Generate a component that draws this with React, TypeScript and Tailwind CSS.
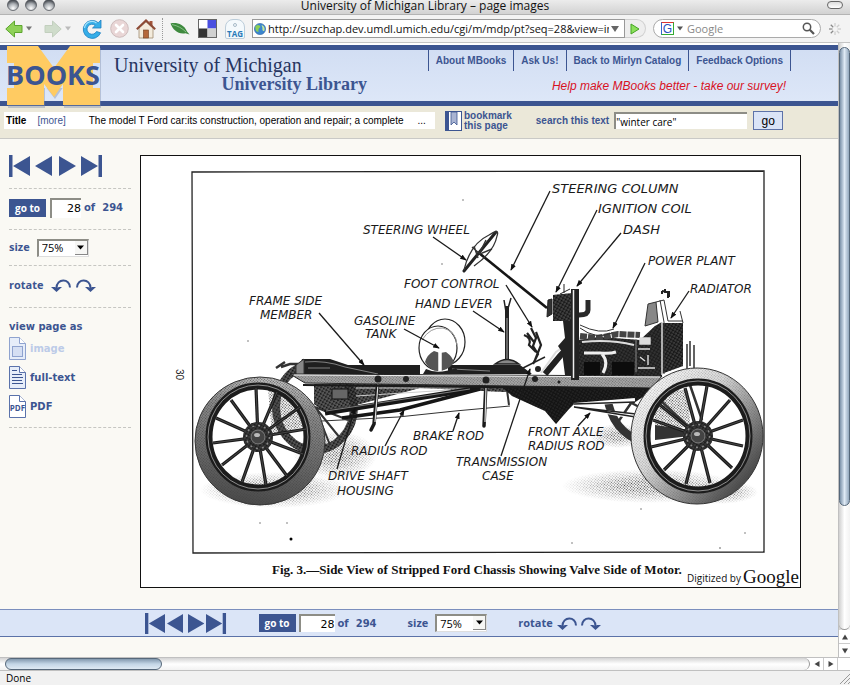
import React from 'react';

const NAVY = '#3c5591';

function TitleBar() {
  return (
    <div className="relative flex h-[15px] items-start justify-center border-b border-[#b4b4b4] bg-linear-to-b from-[#ececec] to-[#d2d2d2]">
      <svg className="absolute left-0 top-0" width="64" height="14" viewBox="0 0 64 14" aria-hidden="true">
        <defs>
          <radialGradient id="orb" cx="0.5" cy="0.8" r="0.7">
            <stop offset="0" stopColor="#fff" />
            <stop offset="0.6" stopColor="#a9adb2" />
            <stop offset="1" stopColor="#4c5056" />
          </radialGradient>
        </defs>
        {[13, 31, 49].map((x) => (
          <circle key={x} cx={x} cy="5" r="5.5" fill="url(#orb)" stroke="#54585e" strokeWidth="0.8" />
        ))}
      </svg>
      <h1 className="font-['Open_Sans',sans-serif] text-[12px] leading-[12px] text-[#111]">
        University of Michigan Library – page images
      </h1>
      <div className="absolute right-[7px] top-[1px] h-[8px] w-[16px] rounded-full border border-[#666] bg-linear-to-b from-[#ddd] to-white" />
    </div>
  );
}

function Arrow({ left, fill, stroke }: { left?: boolean; fill: string; stroke: string }) {
  return (
    <svg width="18" height="18" viewBox="0 0 18 18" aria-hidden="true">
      <path
        d={left ? 'M0.8 9 L9.5 1 V5.5 H17 V12.5 H9.5 V17 Z' : 'M17.2 9 L8.5 1 V5.5 H1 V12.5 H8.5 V17 Z'}
        fill={fill}
        stroke={stroke}
        strokeWidth="1"
        strokeLinejoin="round"
      />
    </svg>
  );
}

function Caret({ color }: { color: string }) {
  return (
    <svg className="ml-[3px]" width="6" height="5" viewBox="0 0 6 5" aria-hidden="true">
      <path d="M0 0.5H6L3 4.5Z" fill={color} />
    </svg>
  );
}

function Toolbar() {
  return (
    <div className="flex h-[28px] items-center border-b border-[#c4c4c4] bg-[#f3f3f3] pl-[5px] pr-[8px]">
      <button aria-label="Back" className="flex items-center">
        <Arrow left fill="#8fd158" stroke="#5da52f" />
        <Caret color="#777" />
      </button>
      <button aria-label="Forward" className="ml-[12px] flex items-center">
        <Arrow fill="#cfdccb" stroke="#c2cfbe" />
        <Caret color="#bbb" />
      </button>
      <button aria-label="Reload" className="ml-[11px]">
        <svg width="20" height="20" viewBox="0 0 20 20" aria-hidden="true">
          <path d="M19 1V9H10.500L13.200 6.400A5 5 0 1 0 14.500 12.500L18.600 13.800A9 9 0 1 1 16.200 3.700Z" fill="#36aee8" stroke="#1d7fc0" strokeWidth="0.8" />
          <path d="M2.500 9A7.500 7.500 0 0 1 14.500 4" fill="none" stroke="#a5e2fb" strokeWidth="1.200" />
        </svg>
      </button>
      <button aria-label="Stop" className="ml-[8px]">
        <svg width="19" height="19" viewBox="0 0 19 19" aria-hidden="true">
          <circle cx="9.500" cy="9.500" r="8.800" fill="#e9d6d6" stroke="#cdbcbc" />
          <path d="M6 6L13 13M13 6L6 13" stroke="#fff" strokeWidth="2.600" strokeLinecap="round" />
        </svg>
      </button>
      <button aria-label="Home" className="ml-[7px]">
        <svg width="20" height="20" viewBox="0 0 20 20" aria-hidden="true">
          <rect x="13.500" y="2" width="3" height="6" fill="#a3553b" />
          <path d="M3 9L10 3L17 9V19H3Z" fill="#f3ebdc" stroke="#a08a70" strokeWidth="0.8" />
          <path d="M0.800 10.200L10 1.500L19.200 10.200" fill="none" stroke="#8d4a35" strokeWidth="2" />
          <rect x="7.500" y="11" width="5" height="8" fill="#b5683b" stroke="#6f3c20" strokeWidth="0.6" />
        </svg>
      </button>
      <div className="ml-[6px] h-[22px] border-l border-dotted border-[#999]" />
      <button aria-label="Leaf" className="ml-[7px]">
        <svg width="20" height="14" viewBox="0 0 20 14" aria-hidden="true">
          <path d="M0.500 1.500C6 0 14 2 17 9.500L19.500 12.500L15.500 11.200C8 12.500 3 8 0.500 1.500Z" fill="#3f8a3f" />
          <path d="M2 2.500C8 4 12 6 16 10" stroke="#85c285" fill="none" />
        </svg>
      </button>
      <button aria-label="Bookmarks" className="ml-[8px]">
        <svg width="19" height="19" viewBox="0 0 19 19" aria-hidden="true">
          <rect x="0.500" y="0.500" width="18" height="18" fill="#fff" stroke="#666" />
          <rect x="9.500" y="1" width="8.500" height="8.500" fill="#4a4fe0" />
          <rect x="1" y="9.500" width="8.500" height="8.500" fill="#333" />
          <rect x="9.500" y="9.500" width="8.500" height="8.500" fill="#d0d0d0" />
        </svg>
      </button>
      <button aria-label="Tag" className="ml-[8px] flex h-[20px] w-[20px] flex-col items-center justify-end rounded-t-[8px] rounded-b-[2px] border border-[#bccdda] bg-[#f4f9fc] font-['Open_Sans',sans-serif] text-[8px] font-bold leading-[9px] text-[#2a7ab8]">
        <span className="mb-[2px] h-[4px] w-[4px] rounded-full border border-[#a8bac8]" />
        TAG
      </button>
      <div className="ml-[7px] flex h-[19px] min-w-0 flex-1 items-center border border-[#999] bg-white pl-[1px] pr-[5px]">
        <svg className="shrink-0" width="12" height="12" viewBox="0 0 12 12" aria-hidden="true">
          <circle cx="6" cy="6" r="5.600" fill="#3c86cf" stroke="#2d63a0" strokeWidth="0.6" />
          <path d="M1.500 3C4 1 6 2 6.500 4C5 5 4 6 4.500 9C2 9 1 6 1.500 3Z" fill="#8ccf54" />
          <path d="M7.500 2C10 2.500 11 5 10.500 7.500C9 9 8 7 8.500 5Z" fill="#c6ea9b" />
        </svg>
        <input
          aria-label="Address"
          className="ml-[2px] min-w-0 flex-1 bg-transparent font-['Open_Sans',sans-serif] text-[11px] leading-[16px] text-[#111] outline-none"
          defaultValue="http://suzchap.dev.umdl.umich.edu/cgi/m/mdp/pt?seq=28&view=image"
        />
        <svg className="ml-[2px] shrink-0" width="8" height="6" viewBox="0 0 8 6" aria-hidden="true">
          <path d="M0 0H8L4 6Z" fill="#666" />
        </svg>
      </div>
      <button aria-label="Go to address" className="flex h-[19px] w-[21px] items-center justify-center rounded-r-full border border-l-0 border-[#d0d0d0] bg-[#eee]">
        <svg width="10" height="12" viewBox="0 0 10 12" aria-hidden="true">
          <path d="M1 1L9 6L1 11Z" fill="#8be05b" stroke="#45a424" />
        </svg>
      </button>
      <div className="ml-[7px] flex h-[19px] w-[168px] items-center rounded-full border border-[#aaa] bg-white pl-[7px] pr-[5px]">
        <span className="flex h-[13px] w-[13px] items-center justify-center border border-t-[#d33] border-r-[#3a3] border-b-[#3a3] border-l-[#36c] font-['Liberation_Sans',Arial,sans-serif] text-[12px] leading-[12px] text-[#2b4fc0]">
          G
        </span>
        <Caret color="#555" />
        <input
          aria-label="Search Google"
          placeholder="Google"
          className="ml-[4px] w-[60px] min-w-0 flex-1 bg-transparent font-['Open_Sans',sans-serif] text-[11px] leading-[16px] outline-none placeholder:text-[#888]"
        />
        <svg width="13" height="13" viewBox="0 0 13 13" aria-hidden="true">
          <circle cx="5" cy="5" r="3.700" fill="none" stroke="#555" strokeWidth="1.500" />
          <path d="M7.800 7.800L12 12" stroke="#555" strokeWidth="2.200" />
        </svg>
      </div>
      <svg className="ml-[7px]" width="14" height="14" viewBox="0 0 14 14" aria-hidden="true">
        {[0, 45, 90, 135, 180, 225, 270, 315].map((a) => (
          <path key={a} d="M7 1V4.500" stroke={a > 180 ? '#888' : '#ccc'} strokeWidth="1.200" transform={`rotate(${a} 7 7)`} />
        ))}
      </svg>
    </div>
  );
}

function Header() {
  const links = ['About MBooks', 'Ask Us!', 'Back to Mirlyn Catalog', 'Feedback Options'];
  return (
    <header className="flex h-[61px] border-y-[5px] border-[#3c5591] bg-linear-to-b from-[#d2def3] to-[#dde7f8]">
      <svg className="relative -mt-[5px] shrink-0 overflow-visible" width="104" height="61" viewBox="0 45 104 61" role="img" aria-label="MBooks">
        <path
          d="M8 48H38L54 70L70 48H101V65H101V90H101V108H64V86L55 99L45 86V108H8V90H8V65H8Z"
          fill="#7d8cab"
          opacity="0.4"
        />
        <path d="M7 63H100V88H7Z" fill="#d8e3f5" />
        <path d="M7 46H38L54 68L70 46H100V63H93V88H100V105H63V84L54 97L44 84V105H7V88H14V63H7Z" fill="#ffcb62" />
        <text x="6" y="85" fontFamily="Open Sans, sans-serif" fontWeight="700" fontSize="27" fill={NAVY}>
          BOOKS
        </text>
      </svg>
      <div className="ml-[10px] w-[253px] shrink-0 pt-[5px] font-['Liberation_Serif',serif]">
        <div className="text-[20px] leading-[20px] text-[#27355f]">University of Michigan</div>
        <div className="text-right text-[18px] font-bold leading-[18px] text-[#3c5591]">University Library</div>
      </div>
      <div className="ml-auto mr-[47px] font-['Liberation_Sans',Arial,sans-serif]">
        <nav className="flex border-l border-[#3c5591]">
          {links.map((l) => (
            <a key={l} href="#" className="border-r border-[#3c5591] px-[7px] pb-[3px] pt-[4px] text-[10px] font-bold leading-[14px] text-[#3c5591]">
              {l}
            </a>
          ))}
        </nav>
        <a href="#" className="mr-[5px] mt-[7px] block text-right text-[12px] italic leading-[16px] text-[#d8121f]">
          Help make MBooks better - take our survey!
        </a>
      </div>
    </header>
  );
}

function TitleRow() {
  return (
    <div className="flex h-[33px] items-center border-b border-[#c9c9c6] bg-[#ebe8d9] pb-[3px] font-['Liberation_Sans',Arial,sans-serif]">
      <div className="ml-[4px] flex h-[17px] w-[431px] items-center bg-white pl-[2px] text-[10px] leading-[16px] text-black">
        <b>Title</b>
        <a href="#" className="ml-[11px] text-[#3c5591]">[more]</a>
        <span className="ml-[23px] whitespace-nowrap">The model T Ford car:its construction, operation and repair; a complete</span>
        <span className="ml-[14px]">...</span>
      </div>
      <a href="#" className="ml-[10px] flex items-center text-[10px] font-bold leading-[10px] text-[#3c5591]">
        <svg className="mr-[2px]" width="17" height="20" viewBox="0 0 17 20" aria-hidden="true">
          <rect x="0.500" y="0.500" width="16" height="19" fill="#fff" stroke={NAVY} />
          <rect x="0" y="0" width="4" height="20" fill={NAVY} />
          <path d="M6 1H12V14L9 11L6 14Z" fill="#a9b4d2" stroke={NAVY} strokeWidth="0.8" />
        </svg>
        <span>
          bookmark
          <br />
          this page
        </span>
      </a>
      <form className="ml-[24px] flex items-center" onSubmit={(e) => e.preventDefault()}>
        <label htmlFor="q" className="text-[10px] font-bold text-[#3c5591]">search this text</label>
        <input
          id="q"
          defaultValue={'"winter care"'}
          className="ml-[5px] h-[17px] w-[133px] border-l-2 border-t-2 border-[#8d8d86] bg-white font-['Open_Sans',sans-serif] text-[10px] leading-[14px] text-black outline-none"
        />
        <button className="ml-[6px] h-[19px] w-[30px] border border-[#5d72a8] bg-[#dae4f7] text-[12px] leading-[16px] text-black">go</button>
      </form>
    </div>
  );
}

function PageArrows({ compact }: { compact?: boolean }) {
  const size = compact ? 'h-[21px]' : 'h-[22px]';
  const btn = 'flex items-center';
  return (
    <div className={compact ? 'flex gap-[2px]' : 'flex gap-[5px]'}>
      <button aria-label="First page" className={btn}>
        <svg className={size} viewBox="0 0 21 22" aria-hidden="true">
          <path d="M0 0H3.500V22H0ZM21 1V21L4 11Z" fill={NAVY} />
        </svg>
      </button>
      <button aria-label="Previous page" className={btn}>
        <svg className={size} viewBox="0 0 17 22" aria-hidden="true">
          <path d="M17 1V21L0 11Z" fill={NAVY} />
        </svg>
      </button>
      <button aria-label="Next page" className={compact ? 'ml-[3px] flex items-center' : 'ml-[2px] flex items-center'}>
        <svg className={size} viewBox="0 0 17 22" aria-hidden="true">
          <path d="M0 1V21L17 11Z" fill={NAVY} />
        </svg>
      </button>
      <button aria-label="Last page" className={btn}>
        <svg className={size} viewBox="0 0 21 22" aria-hidden="true">
          <path d="M21 0H17.500V22H21ZM0 1V21L17 11Z" fill={NAVY} />
        </svg>
      </button>
    </div>
  );
}

function GoTo({ id, wide }: { id: string; wide?: boolean }) {
  return (
    <form className="flex items-center" onSubmit={(e) => e.preventDefault()}>
      <button className="h-[18px] w-[37px] bg-[#3c5591] font-['Open_Sans',sans-serif] text-[10px] font-bold leading-[16px] text-white">go to</button>
      <input
        id={id}
        aria-label="Page number"
        defaultValue="28"
        className={`${wide ? 'ml-[3px] h-[18px] w-[36px]' : 'ml-[4px] h-[20px] w-[31px]'} border-l-2 border-t-2 border-[#8d8d86] bg-white text-right font-['DejaVu_Sans',Verdana,sans-serif] text-[11px] text-black outline-none`}
      />
      <label htmlFor={id} className="ml-[3px] font-['DejaVu_Sans',Verdana,sans-serif] text-[10px] font-bold text-[#3c5591]">
        of&nbsp; 294
      </label>
    </form>
  );
}

function SizePicker({ id }: { id: string }) {
  return (
    <div className="flex items-center">
      <label htmlFor={id} className="font-['Open_Sans',Verdana,sans-serif] text-[11px] font-bold text-[#3c5591]">size</label>
      <div className="relative ml-[7px] flex">
        <select id={id} defaultValue="75" className="h-[18px] w-[52px] appearance-none rounded-none border border-l-2 border-t-2 border-b-[#ddd] border-l-[#8d8d86] border-r-[#ddd] border-t-[#8d8d86] bg-white pl-[3px] font-['Open_Sans',sans-serif] text-[11px] leading-[14px] text-black outline-none">
          <option value="50">50%</option>
          <option value="75">75%</option>
          <option value="100">100%</option>
        </select>
        <span className="pointer-events-none absolute right-[1px] top-[2px] flex h-[14px] w-[13px] items-center justify-center border-b border-r border-[#888] bg-[#f6f6f4]">
          <svg width="7" height="5" viewBox="0 0 7 5" aria-hidden="true">
            <path d="M0 0.500H7L3.500 4.500Z" fill="#000" />
          </svg>
        </span>
      </div>
    </div>
  );
}

function Rotate({ compact }: { compact?: boolean }) {
  return (
    <div className="flex items-center">
      <span className="font-['Open_Sans',Verdana,sans-serif] text-[11px] font-bold text-[#3c5591]">rotate</span>
      <button aria-label="Rotate left" className={compact ? 'ml-[4px]' : 'ml-[7px]'}>
        <svg width="20" height="13" viewBox="0 0 20 13" aria-hidden="true">
          <path d="M19 8.500C19 -1 5.500 -1 5.500 9" fill="none" stroke={NAVY} strokeWidth="2" />
          <path d="M0 8H4L5.500 9L8 8H11L5.500 13Z" fill={NAVY} />
        </svg>
      </button>
      <button aria-label="Rotate right" className={compact ? 'ml-[4px]' : 'ml-[5px]'}>
        <svg width="20" height="13" viewBox="0 0 20 13" aria-hidden="true">
          <path d="M1 8.500C1 -1 14.500 -1 14.500 9" fill="none" stroke={NAVY} strokeWidth="2" />
          <path d="M20 8H16L14.500 9L12 8H9L14.500 13Z" fill={NAVY} />
        </svg>
      </button>
    </div>
  );
}

function DocIcon({ kind }: { kind: 'image' | 'text' | 'pdf' }) {
  const c = kind === 'image' ? '#8fa3cf' : '#5a72ab';
  return (
    <svg width="17" height="23" viewBox="0 0 17 23" aria-hidden="true">
      <path d="M0.500 0.500H10.500L16.500 6.500V22.500H0.500Z" fill={kind === 'pdf' ? '#fff' : '#e6edf9'} stroke={c} />
      <path d="M10.500 0.500V6.500H16.500" fill="#fff" stroke={c} />
      {kind === 'image' && <rect x="3.500" y="9.500" width="10" height="10" fill="#d5dff3" stroke={c} />}
      {kind === 'text' && <path d="M3 4.500H8M3 8.500H13M3 11.500H14M3 14.500H13M3 17.500H14" stroke={NAVY} />}
      {kind === 'pdf' && (
        <text x="8.500" y="15.500" textAnchor="middle" fontFamily="Open Sans, sans-serif" fontWeight="700" fontSize="8" fill={NAVY}>
          PDF
        </text>
      )}
    </svg>
  );
}

function Sidebar() {
  const cell = 'flex border-b border-dashed border-[#c6c6c2]';
  return (
    <aside className="ml-[9px] w-[131px] shrink-0 pr-[9px] pt-[16px]">
      <div className={`${cell} h-[34px] items-start`}>
        <PageArrows />
      </div>
      <div className={`${cell} h-[41px] items-center pb-[3px]`}>
        <GoTo id="page-side" />
      </div>
      <div className={`${cell} h-[36px] items-center`}>
        <SizePicker id="size-side" />
      </div>
      <div className={`${cell} h-[42px] items-center pb-[2px]`}>
        <Rotate />
      </div>
      <div className="border-b border-dashed border-[#c6c6c2] pb-[9px] pt-[11px] font-['DejaVu_Sans',Verdana,sans-serif] text-[10px] font-bold leading-[16px] text-[#3c5591]">
        <h2>view page as</h2>
        <ul className="mt-[2px] flex flex-col gap-[6px]">
          <li className="flex items-center gap-[4px] text-[#bccbe8]"><DocIcon kind="image" />image</li>
          <li><a href="#" className="flex items-center gap-[4px]"><DocIcon kind="text" />full-text</a></li>
          <li><a href="#" className="flex items-center gap-[4px]"><DocIcon kind="pdf" />PDF</a></li>
        </ul>
      </div>
    </aside>
  );
}

type Pt = [number, number];

function Wheel({ cx, cy, rx, ry, rimX, rimY, hub, spokes, tire, grain }: { cx: number; cy: number; rx: number; ry: number; rimX: number; rimY: number; hub: Pt; spokes: Pt[]; tire: string; grain: number }) {
  const ring = `M${cx - rx} ${cy}a${rx} ${ry} 0 1 0 ${rx * 2} 0a${rx} ${ry} 0 1 0 ${-rx * 2} 0ZM${hub[0] - rimX + 2} ${hub[1]}a${rimX - 2} ${rimY - 2} 0 1 0 ${rimX * 2 - 4} 0a${rimX - 2} ${rimY - 2} 0 1 0 ${-rimX * 2 + 4} 0Z`;
  return (
    <g>
      <path fillRule="evenodd" fill={`url(#${tire})`} stroke="#333" strokeWidth="1" d={ring} />
      <path fillRule="evenodd" fill="url(#dots)" opacity={grain} d={ring} />
      <ellipse cx={hub[0]} cy={hub[1]} rx={rimX - 3} ry={rimY - 3} fill="none" stroke="#1c1c1c" strokeWidth="7" />
      <ellipse cx={hub[0]} cy={hub[1]} rx={rimX - 2} ry={rimY - 2} fill="none" stroke="#aaa" strokeWidth="0.8" />
      {spokes.map(([x, y], i) => (
        <g key={i}>
          <path d={`M${hub[0]} ${hub[1]}L${x} ${y}`} stroke="#1a1a1a" strokeWidth="3.200" />
          <path d={`M${hub[0]} ${hub[1]}L${x} ${y}`} stroke="#666" strokeWidth="0.600" />
        </g>
      ))}
      <circle cx={hub[0]} cy={hub[1]} r="15" fill="#2b2b2b" />
      <circle cx={hub[0]} cy={hub[1]} r="15" fill="url(#stipple)" opacity="0.6" />
      <circle cx={hub[0]} cy={hub[1]} r="11.500" fill="none" stroke="#888" strokeWidth="1.500" strokeDasharray="2 4" />
      <circle cx={hub[0]} cy={hub[1]} r="7" fill="#444" stroke="#999" strokeWidth="0.700" />
      <ellipse cx={hub[0] - 1} cy={hub[1] - 2} rx="3" ry="2" fill="#bbb" />
    </g>
  );
}

const labels: { x: number; y: number; s: number; t: string }[] = [
  { x: 552, y: 193, s: 13, t: 'STEERING COLUMN' },
  { x: 598, y: 213, s: 13, t: 'IGNITION COIL' },
  { x: 623, y: 234, s: 13, t: 'DASH' },
  { x: 648, y: 265, s: 12, t: 'POWER PLANT' },
  { x: 690, y: 293, s: 12, t: 'RADIATOR' },
  { x: 363, y: 234, s: 12, t: 'STEERING WHEEL' },
  { x: 404, y: 288, s: 12, t: 'FOOT CONTROL' },
  { x: 415, y: 308, s: 12, t: 'HAND LEVER' },
  { x: 249, y: 305, s: 12, t: 'FRAME SIDE' },
  { x: 260, y: 319, s: 12, t: 'MEMBER' },
  { x: 354, y: 325, s: 12, t: 'GASOLINE' },
  { x: 365, y: 338, s: 12, t: 'TANK' },
  { x: 413, y: 440, s: 12, t: 'BRAKE ROD' },
  { x: 351, y: 455, s: 12, t: 'RADIUS ROD' },
  { x: 328, y: 480, s: 12, t: 'DRIVE SHAFT' },
  { x: 337, y: 495, s: 12, t: 'HOUSING' },
  { x: 528, y: 436, s: 12, t: 'FRONT AXLE' },
  { x: 528, y: 450, s: 12, t: 'RADIUS ROD' },
  { x: 456, y: 466, s: 12, t: 'TRANSMISSION' },
  { x: 482, y: 480, s: 12, t: 'CASE' },
];

const pointers = [
  'M550 191L511 270', 'M597 210L556 292', 'M621 233L577 286', 'M645 263L613 328', 'M689 291L671 318',
  'M433 237L466 260', 'M506 285L532 327', 'M473 311L504 332', 'M319 313L364 365', 'M404 329L439 348',
  'M453 431L459 413', 'M385 446L404 410', 'M337 469L355 408', 'M578 426L590 413', 'M501 456L530 369',
];

const leftSpokes: Pt[] = [[256, 388], [277, 392], [300, 407], [306, 429], [303, 454], [287, 476], [266, 485], [242, 482], [222, 465], [213, 443], [216, 418], [231, 400]];
const rightSpokes: Pt[] = [[707, 386], [730, 400], [743, 420], [743, 446], [732, 468], [710, 483], [686, 484], [664, 470], [651, 447], [653, 420], [660, 405], [685, 388]];

function ChassisFigure() {
  return (
    <svg className="block w-full" viewBox="141 156 659 431" role="img" aria-label="Side view of stripped Ford chassis">
      <defs>
        <pattern id="stipple" width="3" height="3" patternUnits="userSpaceOnUse" patternTransform="rotate(30)">
          <rect x="0" y="0" width="1.600" height="1.600" fill="#111" />
          <rect x="1.600" y="1.500" width="0.900" height="0.900" fill="#999" />
        </pattern>
        <pattern id="dots" width="2" height="2" patternUnits="userSpaceOnUse" patternTransform="rotate(40)">
          <rect width="1.100" height="1.100" fill="#444" />
        </pattern>
        <radialGradient id="fade">
          <stop offset="0.300" stopColor="#fff" />
          <stop offset="1" stopColor="#000" />
        </radialGradient>
        <mask id="shade" maskContentUnits="objectBoundingBox">
          <rect width="1" height="1" fill="url(#fade)" />
        </mask>
        <linearGradient id="tireL" x1="0.600" y1="0" x2="0.450" y2="1">
          <stop offset="0" stopColor="#c9c9c9" />
          <stop offset="0.250" stopColor="#909090" />
          <stop offset="1" stopColor="#4a4a4a" />
        </linearGradient>
        <linearGradient id="tireR" x1="0.100" y1="0.100" x2="0.900" y2="0.800">
          <stop offset="0" stopColor="#fff" />
          <stop offset="0.400" stopColor="#ddd" />
          <stop offset="1" stopColor="#4a4a4a" />
        </linearGradient>
        <marker id="tip" viewBox="0 0 8 6" refX="7" refY="3" markerWidth="7" markerHeight="5" markerUnits="userSpaceOnUse" orient="auto">
          <path d="M0 0L8 3L0 6Z" fill="#111" />
        </marker>
      </defs>

      <path d="M192 172L764 171V552L193 553Z" fill="none" stroke="#222" strokeWidth="1.300" />
      <g fill="#555">
        <circle cx="291" cy="539" r="1.500" fill="#000" />
        <circle cx="248" cy="341" r="0.700" /><circle cx="260" cy="523" r="0.700" /><circle cx="287" cy="523" r="0.700" />
        <circle cx="463" cy="200" r="0.700" /><circle cx="442" cy="264" r="0.700" /><circle cx="641" cy="509" r="0.700" />
        <circle cx="572" cy="543" r="0.700" /><circle cx="745" cy="533" r="0.700" /><circle cx="720" cy="548" r="0.800" />
      </g>

      {/* ground shadows */}
      <ellipse cx="275" cy="490" rx="75" ry="18" fill="url(#dots)" mask="url(#shade)" />
      <ellipse cx="335" cy="455" rx="42" ry="24" fill="url(#dots)" mask="url(#shade)" />
      <ellipse cx="650" cy="486" rx="88" ry="17" fill="url(#dots)" mask="url(#shade)" />
      <ellipse cx="720" cy="492" rx="38" ry="12" fill="url(#dots)" mask="url(#shade)" />
      <ellipse cx="618" cy="436" rx="28" ry="12" fill="url(#dots)" mask="url(#shade)" />

      {/* far wheels */}
      <ellipse cx="315" cy="407" rx="39" ry="43" fill="none" stroke="#444" strokeWidth="8" />
      <ellipse cx="315" cy="407" rx="39" ry="43" fill="none" stroke="url(#stipple)" strokeWidth="8" />
      <path d="M315 407L340 438M315 407L348 420M315 407L330 445" stroke="#333" strokeWidth="2" />
      <path d="M606 388C608 412 616 430 637 440" fill="none" stroke="#333" strokeWidth="8" />
      <path d="M616 425L640 390M622 398L645 410M690 385L702 420M660 400L690 428" stroke="#333" strokeWidth="2.500" />
      <path d="M655 390H688L690 425L655 437Z" fill="url(#dots)" />
      <path d="M655 425L690 430V436L655 440Z" fill="#333" />
      <path d="M268 388L305 400L312 424L272 436Z" fill="url(#dots)" />

      {/* frame deck */}
      <path d="M300 365L302 359H330L348 365H420V375H300Z" fill="#1f1f1f" />
      <path d="M448 365H520L532 374H448Z" fill="#1f1f1f" />
      <path d="M305 362Q325 360 345 367L378 374M308 368H330M452 369L490 371" fill="none" stroke="#999" strokeWidth="0.800" />
      <path d="M276 368L285 362M281 367L290 364H297V374" fill="none" stroke="#333" strokeWidth="2.500" />
      <path d="M296 365L304 359V376H296Z" fill="#888" stroke="#333" />

      {/* rear springs and rods */}
      <path d="M314 384H540L505 392L420 388L360 404L325 412L314 404Z" fill="#2a2a2a" opacity="0.850" />
      <path d="M314 384H540L505 392L420 388L360 404L325 412L314 404Z" fill="url(#stipple)" />
      <path d="M332 389H348V399H332Z" fill="#666" stroke="#111" />
      <path d="M356 388H480M356 396L450 390" stroke="#ccc" strokeWidth="1.200" />
      <path d="M325 413L480 388" stroke="#161616" strokeWidth="5" />
      <path d="M326 411L470 389" stroke="#999" strokeWidth="0.800" />
      <path d="M342 418L400 410L480 389" fill="none" stroke="#161616" strokeWidth="3.500" />
      <path d="M322 421L398 417L455 411L510 406" fill="none" stroke="#333" strokeWidth="1" />
      <path d="M378 380L374 424L371 430M486 382L484 426" fill="none" stroke="#1a1a1a" strokeWidth="3.500" strokeLinecap="round" />
      <path d="M378 384L375 422M486 386L485 422" stroke="#ddd" strokeWidth="1.200" />
      <path d="M507 390L509 405" stroke="#333" strokeWidth="2" />

      {/* fuel tank */}
      <ellipse cx="445" cy="342" rx="20" ry="23" fill="#fff" stroke="#222" strokeWidth="1.200" />
      <ellipse cx="438" cy="348" rx="19" ry="22" fill="#fff" stroke="#222" strokeWidth="1.200" />
      <path d="M422 340Q430 327 443 328Q456 331 457 345" fill="none" stroke="#999" strokeWidth="1" />
      <path d="M425 362A18 18 0 0 1 434 351L440 353L446 352Q453 357 454 363Q447 371 438 371Q430 371 425 362Z" fill="#555" />
      <path d="M440 350V372" stroke="#fff" strokeWidth="3.500" />
      <path d="M423 374L426 369Q438 375 456 368L460 374Z" fill="#222" />

      {/* under pan */}
      <path d="M500 385H660L634 403H575L569 409L556 424L545 411L512 396Z" fill="#141414" />
      <path d="M500 385H660L634 403H575L569 409L556 424L545 411L512 396Z" fill="url(#stipple)" opacity="0.500" />
      <path d="M574 405L635 400M574 406L640 418" stroke="#fff" strokeWidth="4" />
      <path d="M574 404L635 402M574 407L648 419M574 407L636 414" stroke="#222" strokeWidth="1.500" />

      {/* frame rail */}
      <path d="M290 374L662 376L652 388L305 383Z" fill="#a8a8a8" stroke="#222" strokeWidth="1" />
      <path d="M290 374L662 376L652 388L305 383Z" fill="url(#dots)" opacity="0.600" />
      <path d="M294 375L660 377" stroke="#eee" strokeWidth="1" />
      <path d="M303 385L652 389" stroke="#1a1a1a" strokeWidth="2" />
      <circle cx="378" cy="379" r="3.500" fill="#222" /><circle cx="406" cy="379" r="3" fill="#222" /><circle cx="486" cy="380" r="3.500" fill="#222" />
      <circle cx="535" cy="379" r="3" fill="#222" /><circle cx="559" cy="382" r="1.500" fill="#222" />

      {/* levers and pedals */}
      <path d="M507 306V362" stroke="#222" strokeWidth="4" />
      <path d="M507 318V360" stroke="#aaa" strokeWidth="1" />
      <path d="M504 300L506 312M511 298L507 312" stroke="#222" strokeWidth="1.500" />
      <path d="M495 364Q507 355 519 364Z" fill="#888" stroke="#222" strokeWidth="1.500" />
      <path d="M524 335Q532 338 529 345L536 352M531 328L536 338L533 346L538 354L533 364M527 333L534 342M536 332L541 345L535 360" fill="none" stroke="#222" strokeWidth="2.200" />
      <path d="M515 372L545 357" stroke="#222" strokeWidth="1.500" />
      <circle cx="538" cy="369" r="3" fill="#222" />
      <path d="M545 374L560 356L573 342" fill="none" stroke="#222" strokeWidth="6" />
      <path d="M541 373L556 352L572 341" fill="none" stroke="#ddd" strokeWidth="2" />

      {/* steering gear */}
      <path d="M479 253L547 308" stroke="#151515" strokeWidth="2.600" />
      <path d="M464 271L496 232" stroke="#222" strokeWidth="3" strokeLinecap="round" />
      <path d="M464 270Q470 244 489 235Q500 228 497 236Q494 252 474 266" fill="none" stroke="#333" strokeWidth="1.300" />
      <path d="M472 247L480 254L492 249M479 254L486 240M474 246L478 258" stroke="#333" strokeWidth="1.400" fill="none" />

      {/* engine */}
      <path d="M578 340L600 337L640 340L655 326L662 322V376H578Z" fill="#242424" />
      <path d="M578 340L600 337L640 340L655 326L662 322V376H578Z" fill="url(#stipple)" opacity="0.600" />
      <path d="M580 336L598 338L618 334L640 335" fill="none" stroke="#444" strokeWidth="6" strokeDasharray="7 1" />
      <path d="M580 325Q600 335 614 329M580 328Q596 340 612 333" fill="none" stroke="#333" strokeWidth="1" />
      <path d="M582 342Q610 339 634 345" fill="none" stroke="#ddd" strokeWidth="2" />
      <path d="M584 353H600Q610 354 616 352M602 354Q609 362 603 373" fill="none" stroke="#eee" strokeWidth="3" />
      <path d="M640 338H650V344H640ZM638 349H650M640 357L645 361M648 355V365M638 368H655" fill="#ddd" stroke="#ddd" strokeWidth="1.400" />
      <path d="M612 362H634V375H612ZM584 362H600V375H584Z" fill="#0c0c0c" />
      <path d="M636 339V372" stroke="#888" />

      {/* radiator */}
      <path d="M661 323H683V366L661 374Z" fill="#222" />
      <path d="M661 323H683V366L661 374Z" fill="url(#stipple)" />
      <path d="M648 304L656 302L658 322L645 326Z" fill="#888" stroke="#333" />
      <path d="M656 302L664 300L668 321H683M660 300L664 322V374M680 311L683 323" fill="none" stroke="#333" strokeWidth="1" />
      <path d="M662 322V375" stroke="#ddd" strokeWidth="1.500" />
      <path d="M662 291L668 292V298M662 291V294M665 289V292H669V297" fill="none" stroke="#222" strokeWidth="2" />
      <path d="M687 344V370M690 341V366M694 345V368" stroke="#222" strokeWidth="1.400" />

      {/* dash and ignition coil */}
      <path d="M563 321H573V375H565L562 352L558 346L565 338Z" fill="#222" />
      <path d="M553 295L573 293V321H553Z" fill="#2a2a2a" />
      <path d="M553 295L573 293V321H553Z" fill="url(#stipple)" />
      <path d="M548 300L552 299V314L547 317ZM564 284V293M560 294L570 289" fill="#333" stroke="#222" />
      <rect x="571" y="289" width="8" height="91" fill="#222" />
      <path d="M573.500 290V378" stroke="#eee" strokeWidth="1.500" />
      <path d="M588 300V310Q588 315 579 315" fill="none" stroke="#2a2a2a" strokeWidth="5" />

      <Wheel cx={260} cy={441} rx={65} ry={64} rimX={52} rimY={54} hub={[258, 437]} spokes={leftSpokes} tire="tireL" grain={0.8} />
      <Wheel cx={697} cy={436} rx={66} ry={68} rimX={54} rimY={57} hub={[698, 436]} spokes={rightSpokes} tire="tireR" grain={0.35} />

      {pointers.map((d) => (
        <path key={d} d={d} stroke="#1a1a1a" strokeWidth="1.300" markerEnd="url(#tip)" />
      ))}
      <g fill="#1a1a1a" fontFamily="DejaVu Sans, sans-serif" fontStyle="italic">
        {labels.map((l) => (
          <text key={l.t + l.y} x={l.x} y={l.y} fontSize={l.s}>{l.t}</text>
        ))}
      </g>
      <text transform="translate(176 369) rotate(90)" fontFamily="Liberation Sans, Arial, sans-serif" fontSize="10" fill="#222">30</text>
      <text x="272" y="574" fontFamily="Liberation Serif, serif" fontWeight="700" fontSize="13" fill="#111">
        Fig. 3.—Side View of Stripped Ford Chassis Showing Valve Side of Motor.
      </text>
      <text x="687" y="582" fontFamily="Open Sans, sans-serif" fontSize="10" fill="#111">Digitized by</text>
      <text x="743" y="583" fontFamily="Liberation Serif, serif" fontSize="19" fill="#111">Google</text>
    </svg>
  );
}

function BottomBar() {
  return (
    <div className="flex h-[28px] items-center border-y border-t-[#7b8fbd] border-b-[#5b72a8] bg-[#dbe5f7] pl-[145px]">
      <PageArrows compact />
      <div className="ml-[32px]"><GoTo id="page-bottom" wide /></div>
      <div className="ml-[31px]"><SizePicker id="size-bottom" /></div>
      <div className="ml-[31px]"><Rotate compact /></div>
    </div>
  );
}

function VerticalScroll() {
  return (
    <div className="flex w-[12px] shrink-0 flex-col border-l border-[#c0c0c0] bg-linear-to-r from-[#d0d0d0] via-white to-[#f2f2f2]">
      <div className="mt-[4px] h-[459px] w-[11px] rounded-full border border-[#56687a] bg-linear-to-r from-[#7d93aa] via-[#dfeaf5] to-[#93a8bd]" />
      <div className="flex-1 rounded-b-full border-b border-[#999]" />
      <button aria-label="Scroll up" className="flex h-[14px] items-center justify-center border-b border-[#ccc] bg-white">
        <svg width="6" height="6" viewBox="0 0 6 6" aria-hidden="true"><path d="M0 5.500H6L3 0.500Z" fill="#444" /></svg>
      </button>
      <button aria-label="Scroll down" className="flex h-[13px] items-center justify-center bg-white">
        <svg width="6" height="6" viewBox="0 0 6 6" aria-hidden="true"><path d="M0 0.500H6L3 5.500Z" fill="#444" /></svg>
      </button>
    </div>
  );
}

function HorizontalScroll() {
  return (
    <div className="flex h-[14px] items-stretch border-y border-[#c0c0c0] bg-white pr-[12px]">
      <div className="flex flex-1 rounded-r-full border-r border-[#999] bg-linear-to-b from-[#d4d4d4] via-white to-[#f2f2f2] pl-[5px]">
        <div className="w-[157px] rounded-full border border-[#56687a] bg-linear-to-b from-[#8399ae] via-[#c4d6e6] to-[#dfeaf3]" />
      </div>
      <button aria-label="Scroll left" className="flex w-[14px] items-center justify-center border-r border-[#ccc]">
        <svg width="6" height="6" viewBox="0 0 6 6" aria-hidden="true"><path d="M5.500 0V6L0.500 3Z" fill="#444" /></svg>
      </button>
      <button aria-label="Scroll right" className="flex w-[14px] items-center justify-center border-r border-[#ccc]">
        <svg width="6" height="6" viewBox="0 0 6 6" aria-hidden="true"><path d="M0.500 0V6L5.500 3Z" fill="#444" /></svg>
      </button>
    </div>
  );
}

export default function App() {
  return (
    <div className="flex min-h-screen flex-col bg-white">
      <TitleBar />
      <Toolbar />
      <div className="flex flex-1">
        <div className="flex min-w-0 flex-1 flex-col bg-[#faf9f4]">
          <div className="h-[2px] bg-white" />
          <Header />
          <TitleRow />
          <main className="flex pb-[21px]">
            <Sidebar />
            <figure className="mr-[37px] mt-[16px] min-w-0 flex-1 self-start border border-[#111] bg-white">
              <ChassisFigure />
            </figure>
          </main>
          <BottomBar />
        </div>
        <VerticalScroll />
      </div>
      <HorizontalScroll />
      <footer className="flex h-[14px] items-center justify-between bg-[#f1f1f1] pl-[6px] font-['Open_Sans',sans-serif] text-[10px] leading-[14px] text-black">
        <span>Done</span>
        <svg width="12" height="12" viewBox="0 0 12 12" aria-hidden="true">
          <path d="M2 12L12 2M6 12L12 6M10 12L12 10" stroke="#999" />
        </svg>
      </footer>
    </div>
  );
}
